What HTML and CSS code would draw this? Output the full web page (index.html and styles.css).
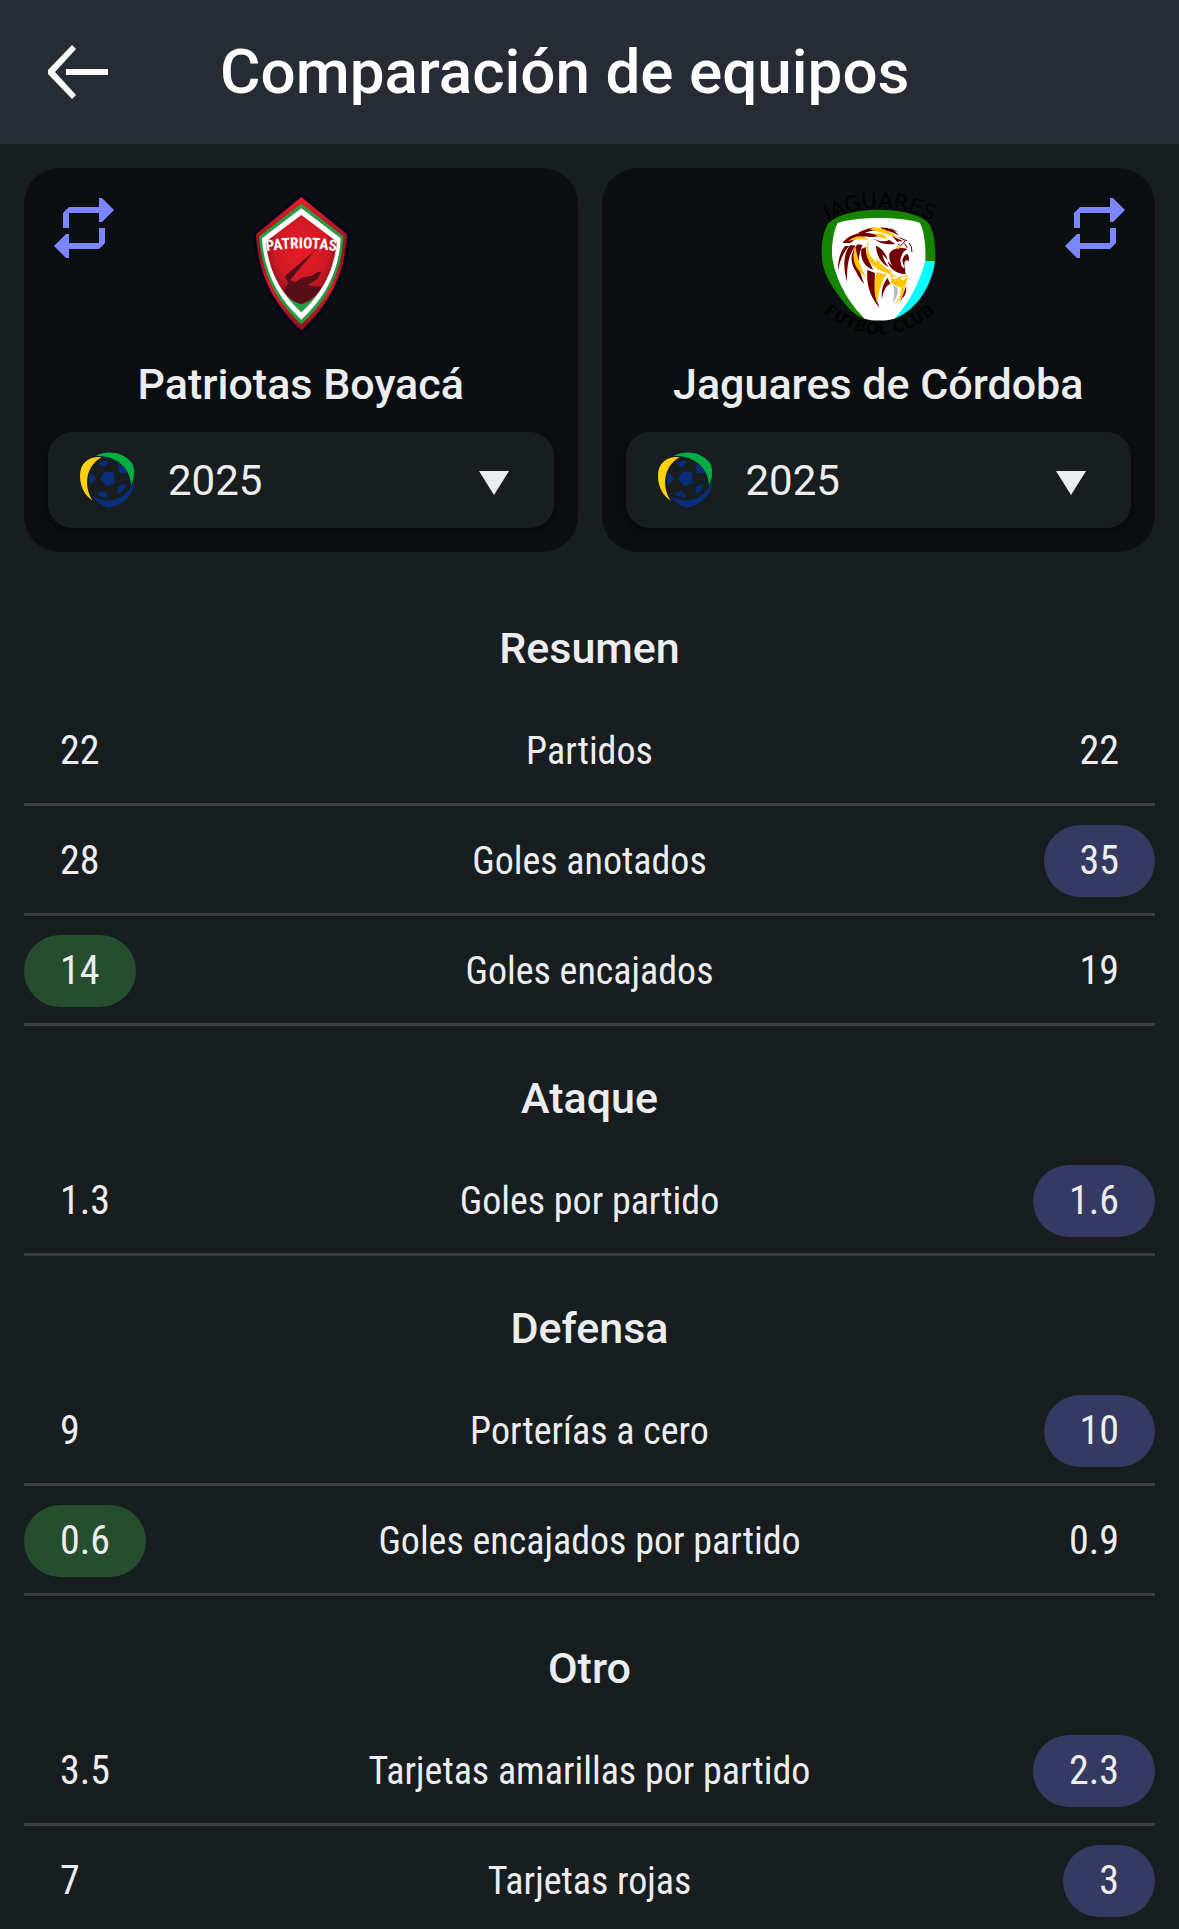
FILE: index.html
```
<!DOCTYPE html>
<html lang="es">
<head>
    <meta charset="UTF-8">
    <meta name="viewport" content="width=device-width, initial-scale=1.0">
    <title>Comparación de equipos</title>
    <link rel="stylesheet" href="styles.css">
</head>
<body>

    <!-- shared icons -->
    <svg class="sprite" aria-hidden="true">
        <symbol id="swap" viewBox="0 0 24 24">
            <path d="M5 12V7l2-2h10V2h1l4 4-4 4h-1V7H7v5z"/>
            <path d="M19 12v5l-2 2H7v3H6l-4-4 4-4h1v3h10v-5z"/>
        </symbol>
        <symbol id="league" viewBox="60 36 168 168">
            <path fill="#ffd10a" d="M125 51C86 48 60 68 60 108c0 36 17 60 38 74C72 142 73 82 125 51z"/>
            <path fill="#04ad43" d="M107 47c34-16 80-14 109 22 10 20 8 44-3 68C213 92 178 47 107 47z"/>
            <path fill="#0b2e7c" d="M96 166c36 28 98 22 127-42 0 38-29 70-75 79-21-4-40-18-52-37z"/>
            <path fill="#0b2e7c" d="M120 117l13-22 29 2 2 33-24 8zM112 70l35-10-13 22zM175 72c12 4 20 14 26 28l-24 0zM89 99c10 2 15 11 19 18l-17 18c-3-10-4-24-2-36zM174 138l24-6c-4 16-12 26-25 29zM110 161l23-9 13 20c-14 1-26-2-36-11z"/>
        </symbol>
    </svg>

    <header class="topbar">
        <button class="back" type="button" aria-label="Volver">
            <svg viewBox="0 0 60 54"><path d="M24 0l4 4L7 27l21 23-4 4L0 29v-4zM18 24h42v6H18z"/></svg>
        </button>
        <h1>Comparación de equipos</h1>
    </header>

    <main>
        <div class="teams">
            <section class="team">
                <div class="team-top">
                    <button class="swap" type="button" aria-label="Cambiar equipo"><svg><use href="#swap"/></svg></button>
                    <svg class="crest" viewBox="624 81 432 432" role="img" aria-label="Patriotas">
                        <defs>
                            <radialGradient id="red" cx=".5" cy=".4" r=".6">
                                <stop offset="0" stop-color="#e81c26"/>
                                <stop offset=".6" stop-color="#d01a24"/>
                                <stop offset="1" stop-color="#7c0f1a"/>
                            </radialGradient>
                            <linearGradient id="rim" x2="0" y2="1">
                                <stop offset="0" stop-color="#e8202a"/>
                                <stop offset=".4" stop-color="#8a141d"/>
                                <stop offset=".7" stop-color="#d81e28"/>
                                <stop offset="1" stop-color="#8a141d"/>
                            </linearGradient>
                            <path id="arc-patriotas" d="M730 260Q841 240 952 260"/>
                        </defs>
                        <path fill="#08051a" d="M841 84l147 120c-5 130-62 231-147 306-85-75-141-176-146-306z"/>
                        <path fill="url(#rim)" d="M841 96l137 112c-5 120-57 214-137 288-80-74-131-168-136-288z"/>
                        <path fill="#2a9c46" d="M841 116l126 98c-4 108-51 196-126 264-75-68-121-156-126-264z"/>
                        <path fill="#fff" d="M841 130l118 90c-4 96-46 178-118 244-72-66-113-148-118-244z"/>
                        <path fill="#2a9c46" d="M748 300c18 52 49 103 93 142 44-39 75-90 93-142z"/>
                        <path fill="url(#red)" d="M841 150l107 80c-6 60-27 113-54 151-16 20-33 32-53 36-20-4-37-16-53-36-27-38-48-91-54-151z"/>
                        <path fill="#560d18" d="M881 257l-90 77 11 20-14 20c14 23 32 38 53 43 24-7 44-25 61-51l-43-5 30-19 12-22-13 2-15 10-28 5-22 14-16-5z"/>
                        <text class="crest-name"><textPath href="#arc-patriotas" startOffset="50%">PATRIOTAS</textPath></text>
                    </svg>
                </div>
                <h2>Patriotas Boyacá</h2>
                <div class="season">
                    <svg class="league"><use href="#league"/></svg>
                    <select aria-label="Temporada de Patriotas Boyacá"><option>2025</option></select>
                    <svg class="caret" viewBox="0 0 30 24"><path d="M0 0h30L15 24z"/></svg>
                </div>
            </section>

            <section class="team">
                <div class="team-top">
                    <svg class="crest" viewBox="80 81 432 432" role="img" aria-label="Jaguares Fútbol Club">
                        <defs>
                            <path id="arc-top" d="M116 186Q302 70 488 186"/>
                            <path id="arc-bottom" d="M106 420Q300 596 494 420"/>
                        </defs>
                        <text class="ring top"><textPath href="#arc-top" startOffset="50%">JAGUARES</textPath></text>
                        <text class="ring bottom"><textPath href="#arc-bottom" startOffset="50%">FUTBOL CLUB</textPath></text>
                        <path fill="#168400" d="M148 174c60-52 237-52 297-3 18 23 24 62 23 117h-31L345 461h-89c-20-4-44-24-68-56-38-50-61-88-61-140 0-42 8-72 21-91z"/>
                        <path fill="#0ff" d="M430 288h37c-10 80-60 150-122 173z"/>
                        <path fill="#fff" d="M175 174c55-20 197-20 247 0 13 28 18 70 16 114-20 72-54 132-93 173-25 7-64 8-89 0-49-48-90-119-98-191-1-38 5-71 17-96z"/>
                        <g fill="#730000">
                            <path d="M189 234c18-22 36-29 66-31 24 1 42 8 62 8-22 4-40 7-52 4-18-3-38 6-52 19zM236 204c24-16 54-17 78-7-22-4-48 0-60 9zM258 194c20-9 42-7 60 2-22-4-38-4-60-2z"/>
                            <path d="M197 243c-16 18-22 49-21 75 5-29 13-50 33-75zM213 240c-22 24-22 70-10 110 0-38 1-77 26-108zM235 238c-24 26-24 54-4 84 6 14 15 27 24 35-17-40-24-77-5-117zM246 252c-4 28 8 54 36 62-14-25-23-45-23-68zM264 315c-4 44 10 84 37 113-15-34-16-74-14-104zM308 402c-4-30 6-48 16-64l9 18c-13 7-20 18-25 46z"/>
                            <path d="M290 242c18 8 31 24 35 44l-16-18c4 17 10 28 20 39-22-11-37-31-39-65zM330 266c10-19 37-19 55-14-17 8-19 19-19 34l12-20c9 0 13 9 10 23-6-7-13-1-13 8l4 30c-24 2-51-17-54-39l13 14c-8-14-9-25-8-36zM368 400c11-7 15-23 12-37-3 14-12 25-18 53z"/>
                            <path d="M303 188c24-2 43 8 56 24-16-9-27-14-42-14zM330 188l25 12-14-2zM279 218c16 12 36 13 51 7l18 12c-22 3-49-1-69-19zM336 210c12 9 24 14 37 18l-20 2z"/>
                        </g>
                        <g fill="#ffc60b">
                            <path d="M270 192c18-8 41-4 64 10l26 19c-25-12-61-19-90-29zM284 207c18-4 34 2 40 14-15-1-27-4-40-14zM206 228c16-13 34-17 50-12l14 9c-22-3-42-3-64 3z"/>
                            <path d="M270 228c-12 24 2 49 24 66l-5-18c14 21 28 34 48 42l-6 9c-26-6-61-24-68-54-4-18-3-35 7-45zM228 244c-12 30-4 61 19 82l15 13c-12-21-27-51-34-95zM292 322c-9 36-9 63 2 94 5-34 9-62 28-88z"/>
                            <path d="M329 316c9 18 36 26 54 12 3 18-4 34-12 42-14-4-24-10-37-16 5-12 0-20-5-38zM346 416c18-8 29-26 31-52l-14 8c4 16-4 29-17 44zM348 243l25 2-18 7z"/>
                        </g>
                        <path fill="#b9b9b9" d="M342 361l13 7c2 17-2 32-14 43 4-17 4-33 1-50z"/>
                        <path fill="none" stroke="#730000" stroke-width="3" d="M355 236q9 11 17-2l6-8M389 234q10 10 9 28M360 218l24 10M375 235l9 14"/>
                        <path fill="none" stroke="#fff" stroke-width="6" d="M340 334q7 10 15 1M365 338q8 8 14-4M386 262c-22 7-25 29-12 46"/>
                    </svg>
                    <button class="swap right" type="button" aria-label="Cambiar equipo"><svg><use href="#swap"/></svg></button>
                </div>
                <h2>Jaguares de Córdoba</h2>
                <div class="season">
                    <svg class="league"><use href="#league"/></svg>
                    <select aria-label="Temporada de Jaguares de Córdoba"><option>2025</option></select>
                    <svg class="caret" viewBox="0 0 30 24"><path d="M0 0h30L15 24z"/></svg>
                </div>
            </section>
        </div>

        <table class="stats">
            <colgroup><col class="side"><col><col class="side"></colgroup>
            <tbody>
                <tr class="group"><th colspan="3" scope="rowgroup">Resumen</th></tr>
                <tr><td><span>22</span></td><th scope="row">Partidos</th><td><span>22</span></td></tr>
                <tr><td><span>28</span></td><th scope="row">Goles anotados</th><td><span class="best">35</span></td></tr>
                <tr><td><span class="best">14</span></td><th scope="row">Goles encajados</th><td><span>19</span></td></tr>
            </tbody>
            <tbody>
                <tr class="group"><th colspan="3" scope="rowgroup">Ataque</th></tr>
                <tr><td><span>1.3</span></td><th scope="row">Goles por partido</th><td><span class="best">1.6</span></td></tr>
            </tbody>
            <tbody>
                <tr class="group"><th colspan="3" scope="rowgroup">Defensa</th></tr>
                <tr><td><span>9</span></td><th scope="row">Porterías a cero</th><td><span class="best">10</span></td></tr>
                <tr><td><span class="best">0.6</span></td><th scope="row">Goles encajados por partido</th><td><span>0.9</span></td></tr>
            </tbody>
            <tbody>
                <tr class="group"><th colspan="3" scope="rowgroup">Otro</th></tr>
                <tr><td><span>3.5</span></td><th scope="row">Tarjetas amarillas por partido</th><td><span class="best">2.3</span></td></tr>
                <tr><td><span>7</span></td><th scope="row">Tarjetas rojas</th><td><span class="best">3</span></td></tr>
            </tbody>
        </table>
    </main>

</body>
</html>
```
FILE: styles.css
```
* {
    box-sizing: border-box;
}
body {
    margin: 0;
    font-family: Roboto, "Liberation Sans", sans-serif;
    font-size: 42px;
    background-color: #181d1f;
    color: #ecedef;
}
button {
    padding: 0;
    border: none;
    background: none;
    cursor: pointer;
}
svg {
    display: block;
}
.sprite {
    display: none;
}
.topbar {
    display: flex;
    align-items: center;
    gap: 112px;
    height: 144px;
    padding: 0 48px;
    background-color: #272b33;
    color: #fdfcff;
}
.topbar h1 {
    margin: 0;
    font-size: 62px;
    font-weight: 500;
    line-height: 72px;
}
.back svg {
    width: 60px;
    height: 54px;
    fill: #fdfcff;
}
main {
    padding: 24px 24px 0;
}
.teams {
    display: grid;
    grid-template-columns: 1fr 1fr;
    gap: 24px;
}
.team {
    padding: 24px;
    border-radius: 36px;
    background-color: #0b0f11;
}
.team-top {
    display: grid;
    grid-template-columns: 1fr 144px 1fr;
    align-items: start;
}
.crest {
    grid-column: 2;
    width: 144px;
    height: 144px;
    overflow: visible;
    text-anchor: middle;
}
.crest-name {
    font-family: "Roboto Condensed", Roboto, sans-serif;
    font-size: 46px;
    font-weight: 700;
    fill: #fff;
}
.ring {
    font-family: "DejaVu Sans", sans-serif;
    fill: #020303;
}
.ring.top {
    font-size: 64px;
}
.ring.bottom {
    font-size: 48px;
    font-weight: 700;
}
.swap {
    justify-self: start;
}
.swap.right {
    justify-self: end;
}
.swap svg {
    width: 72px;
    height: 72px;
    fill: #7c86ff;
}
.team h2 {
    margin: 0;
    font-size: 43px;
    font-weight: 500;
    line-height: 96px;
    text-align: center;
}
.season {
    position: relative;
}
.season select {
    display: block;
    width: 100%;
    height: 96px;
    padding: 0 84px 0 120px;
    border: none;
    border-radius: 24px;
    appearance: none;
    background-color: #181d1f;
    box-shadow: 0 3px 9px rgba(0, 0, 0, 0.5);
    color: inherit;
    font: inherit;
}
.league,
.caret {
    position: absolute;
    pointer-events: none;
}
.league {
    top: 20px;
    left: 32px;
    width: 56px;
    height: 56px;
}
.caret {
    top: 39px;
    right: 45px;
    width: 30px;
    height: 24px;
    fill: #ecedef;
}
.stats {
    width: 100%;
    margin-top: 24px;
    border-spacing: 0;
    table-layout: fixed;
}
.stats .side {
    width: 240px;
}
.stats th,
.stats td {
    padding: 19px 0 16px;
    border-bottom: 3px solid #3b3f42;
    font-family: "Roboto Condensed", "Liberation Sans Narrow", Roboto, sans-serif;
    font-size: 40px;
    font-weight: 400;
    line-height: 72px;
    white-space: nowrap;
}
.stats th {
    font-size: 38px;
}
.stats .group th {
    padding: 24px 0 0;
    border: none;
    font-family: Roboto, "Liberation Sans", sans-serif;
    font-size: 43px;
    font-weight: 500;
    line-height: 96px;
}
.stats span {
    display: block;
    width: fit-content;
    padding: 0 36px;
    border-radius: 36px;
}
.stats td:last-child span {
    margin-left: auto;
}
.stats .best {
    background-color: #264d2d;
}
.stats td:last-child .best {
    background-color: #343a61;
}
.stats tbody:last-child tr:last-child > * {
    padding-bottom: 12px;
    border: none;
}
```
